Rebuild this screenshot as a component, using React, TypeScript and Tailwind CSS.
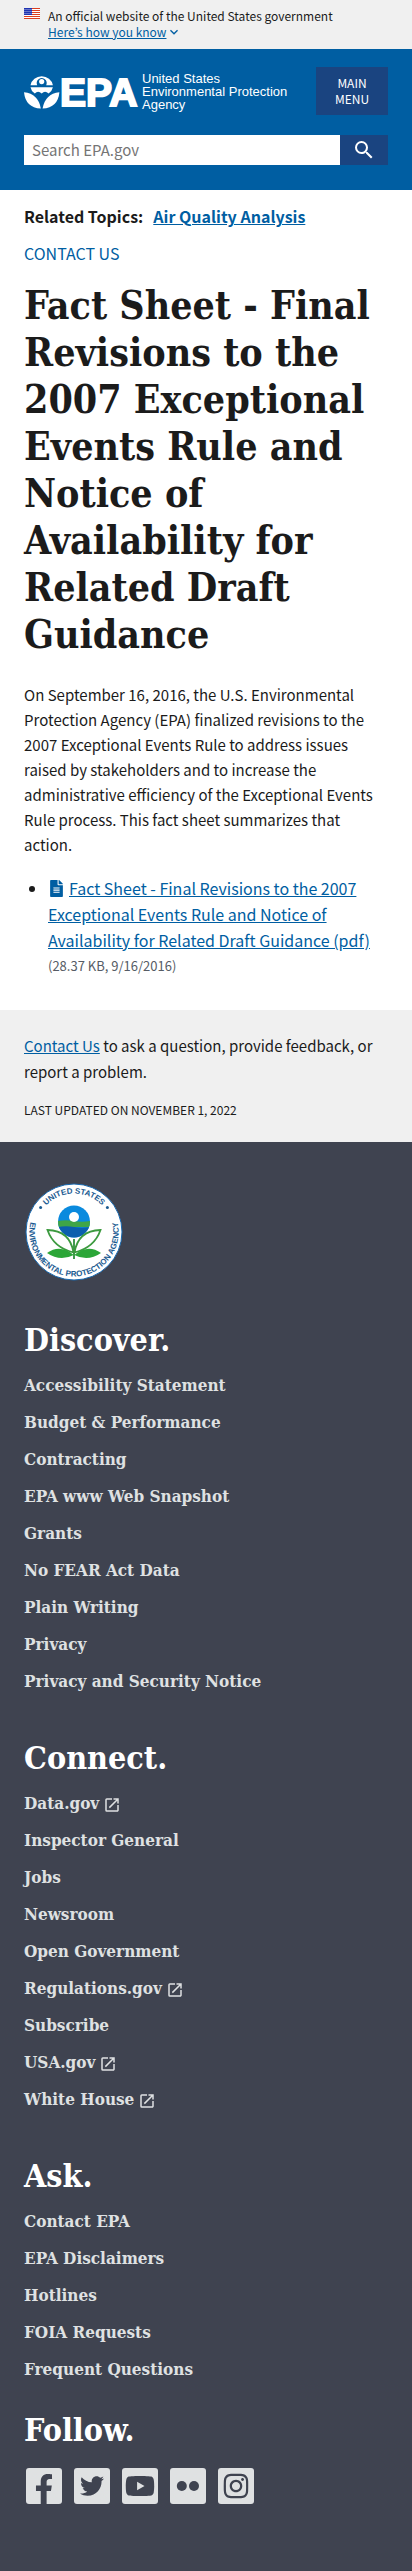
import type { ReactNode } from "react";
import { FaFacebookF, FaFileAlt, FaInstagram, FaTwitter, FaYoutube } from "react-icons/fa";
import { MdExpandMore, MdOpenInNew, MdSearch } from "react-icons/md";

type FooterLink = { label: string; external?: boolean };

const discover: FooterLink[] = [
  { label: "Accessibility Statement" },
  { label: "Budget & Performance" },
  { label: "Contracting" },
  { label: "EPA www Web Snapshot" },
  { label: "Grants" },
  { label: "No FEAR Act Data" },
  { label: "Plain Writing" },
  { label: "Privacy" },
  { label: "Privacy and Security Notice" },
];

const connect: FooterLink[] = [
  { label: "Data.gov", external: true },
  { label: "Inspector General" },
  { label: "Jobs" },
  { label: "Newsroom" },
  { label: "Open Government" },
  { label: "Regulations.gov", external: true },
  { label: "Subscribe" },
  { label: "USA.gov", external: true },
  { label: "White House", external: true },
];

const ask: FooterLink[] = [
  { label: "Contact EPA" },
  { label: "EPA Disclaimers" },
  { label: "Hotlines" },
  { label: "FOIA Requests" },
  { label: "Frequent Questions" },
];

function Flag() {
  return (
    <svg viewBox="0 0 16 11" className="mt-2 h-[11px] w-4 shrink-0" aria-hidden="true">
      <rect width="16" height="11" fill="#fff" />
      {[0, 2, 4, 6, 8, 10].map((y) => (
        <rect key={y} y={y} width="16" height="1" fill="#db3e1f" />
      ))}
      <rect width="8" height="7" fill="#1e33b1" />
      {[1, 3, 5].map((y) =>
        [1, 3, 5, 7].map((x) => (
          <rect key={`${x}-${y}`} x={x - 0.4} y={y} width="0.8" height="0.8" fill="#fff" />
        )),
      )}
    </svg>
  );
}

function Logo() {
  return (
    <a href="#home" className="flex items-center text-white" aria-label="US EPA home">
      <svg viewBox="0 0 116 36" className="h-9 w-[116px] shrink-0 overflow-visible" aria-hidden="true">
        <g fill="#fff">
          <path d="M6.5 12.2A11.4 11 0 0 1 28.9 12.2H22.2A5 5 0 1 0 13.2 12.2Z" />
          <circle cx="17.7" cy="8.6" r="2.6" />
          <path d="M6.5 14.2H28.9Q28 18.2 24.6 20.6Q21 17 17.7 20.6Q14 17 10.8 20.6Q7.2 18.2 6.5 14.2Z" />
          <path d="M0 19.2Q14.5 20.8 16.8 35.6Q1.5 34.5 0 19.2Z" />
          <path d="M35.4 19.2Q21 20.8 18.6 35.6Q34 34.5 35.4 19.2Z" />
        </g>
        <text
          x="36"
          y="33"
          fill="#fff"
          stroke="#fff"
          strokeWidth="2"
          fontSize="39"
          fontWeight="700"
          fontFamily="'Liberation Sans', sans-serif"
        >
          EPA
        </text>
      </svg>
      <span className="ml-0.5 font-['Liberation_Sans',sans-serif] text-[13px] leading-[13px] whitespace-nowrap">
        United States
        <br />
        Environmental Protection
        <br />
        Agency
      </span>
    </a>
  );
}

function Seal() {
  return (
    <svg viewBox="0 0 100 100" className="block size-[100px]" role="img" aria-label="EPA seal">
      <defs>
        <path id="seal-top" d="M11.5 50A38.5 38.5 0 0 1 88.5 50" />
        <path id="seal-bottom" d="M21.3 15.8A44.6 44.6 0 1 0 78.7 15.8" />
      </defs>
      <circle cx="50" cy="50" r="48" fill="#fff" stroke="#1668b0" strokeWidth="1" />
      <g fill="#1b5b91" fontFamily="'Liberation Sans', sans-serif" fontWeight="700" fontSize="8">
        <text textAnchor="middle">
          <textPath href="#seal-top" startOffset="50%">
            UNITED STATES
          </textPath>
        </text>
        <text textAnchor="middle">
          <textPath href="#seal-bottom" startOffset="50%">
            ENVIRONMENTAL PROTECTION AGENCY
          </textPath>
        </text>
        <circle cx="16.6" cy="25.5" r="1.5" />
        <circle cx="83.4" cy="25.5" r="1.5" />
      </g>
      <clipPath id="globe">
        <circle cx="50" cy="39.5" r="16" />
      </clipPath>
      <g clipPath="url(#globe)">
        <rect x="34" y="23" width="32" height="33" fill="#0a8ade" />
        <path d="M34 39Q42 37.5 50 39T66 39V45H34Z" fill="#3fa548" />
        <path d="M34 45Q42 43.5 50 45T66 45V56H34Z" fill="#0b5fae" />
        <circle cx="50" cy="35" r="5" fill="#fff" />
      </g>
      <path d="M50 57V77" stroke="#2d8f3c" strokeWidth="1.8" />
      <g fill="#fff" stroke="#3c9a3f" strokeWidth="1.8">
        <path d="M49.5 70.5Q46 48.5 23.5 48Q29.5 65.5 49.5 70.5Z" />
        <path d="M50.5 70.5Q54 48.5 76.5 48Q70.5 65.5 50.5 70.5Z" />
      </g>
      <g fill="#2ba637">
        <path d="M49.8 73Q36 61.5 23 71Q36 80 49.8 73Z" />
        <path d="M50.2 73Q64 61.5 77 71Q64 80 50.2 73Z" />
      </g>
    </svg>
  );
}

function FooterHeading({ children }: { children: ReactNode }) {
  return (
    <h2 className="font-['DejaVu_Serif_Condensed','DejaVu_Serif',serif] text-[32px] leading-[40px] font-bold text-white">
      {children}
    </h2>
  );
}

function FooterSection({ title, links }: { title: string; links: FooterLink[] }) {
  return (
    <section>
      <FooterHeading>{title}</FooterHeading>
      <ul className="mt-1.5">
        {links.map((link) => (
          <li key={link.label}>
            <a
              href="#footer"
              className="flex h-[37px] items-center gap-1 font-['DejaVu_Serif_Condensed','DejaVu_Serif',serif] text-[17px] font-bold text-[#dfe1e2]"
            >
              {link.label}
              {link.external && <MdOpenInNew className="mt-1 size-[18px]" aria-hidden="true" />}
            </a>
          </li>
        ))}
      </ul>
    </section>
  );
}

function Social({ label, className, children }: { label: string; className?: string; children: ReactNode }) {
  return (
    <a
      href="#social"
      aria-label={label}
      className={`flex size-9 justify-center overflow-hidden rounded-[3px] bg-[#dfe1e2] text-[#3f4350] ${className ?? "items-center"}`}
    >
      {children}
    </a>
  );
}

export default function App() {
  return (
    <div className="min-h-screen bg-white font-['Noto_Sans_CJK_JP',sans-serif] text-base leading-[26px] text-[#1b1b1b]">
      <div className="flex h-[49px] gap-2 bg-[#f0f0f0] px-6 text-xs leading-4">
        <Flag />
        <div className="pt-2">
          <p>An official website of the United States government</p>
          <button className="flex items-center text-[#005ea2]">
            <span className="underline">Here’s how you know</span>
            <MdExpandMore className="size-4" aria-hidden="true" />
          </button>
        </div>
      </div>

      <header className="bg-[#005ea2] px-6 pt-[18px] pb-[25px]">
        <div className="flex items-center justify-between">
          <Logo />
          <button className="h-12 w-[72px] shrink-0 bg-[#1a4480] text-xs leading-4 text-white">
            MAIN
            <br />
            MENU
          </button>
        </div>
        <form className="mt-5 flex h-[30px]" role="search">
          <input
            type="search"
            aria-label="Search EPA.gov"
            placeholder="Search EPA.gov"
            className="min-w-0 flex-1 bg-white px-2 text-[15px] placeholder:text-[#757575]"
          />
          <button type="submit" aria-label="Search" className="flex w-12 items-center justify-center bg-[#1a4480] text-white">
            <MdSearch className="size-6" />
          </button>
        </form>
      </header>

      <main className="px-6 pt-[13px] pb-[31px]">
        <p className="font-bold">
          Related Topics:
          <a href="#topic" className="ml-2.5 text-[#005ea2] underline">
            Air Quality Analysis
          </a>
        </p>
        <a href="#contact" className="mt-[11px] block text-[#005ea2]">
          CONTACT US
        </a>
        <h1 className="mt-4 font-['DejaVu_Serif_Condensed','DejaVu_Serif',serif] text-[39px] leading-[47px] font-bold">
          Fact Sheet - Final Revisions to the 2007 Exceptional Events Rule and Notice of Availability for Related Draft
          Guidance
        </h1>
        <p className="mt-6 text-[15px] leading-[25px]">
          On September 16, 2016, the U.S. Environmental Protection Agency (EPA) finalized revisions to the 2007
          Exceptional Events Rule to address issues raised by stakeholders and to increase the administrative efficiency
          of the Exceptional Events Rule process. This fact sheet summarizes that action.
        </p>
        <ul className="mt-[18px] list-disc pl-6">
          <li>
            <a href="#pdf" className="text-[#005ea2]">
              <FaFileAlt className="mr-1 inline size-[17px] align-[-2px]" aria-hidden="true" />
              <span className="underline">
                Fact Sheet - Final Revisions to the 2007 Exceptional Events Rule and Notice of Availability for Related
                Draft Guidance (pdf)
              </span>
            </a>
            <span className="block text-[13px] text-[#565c65]">(28.37 KB, 9/16/2016)</span>
          </li>
        </ul>
      </main>

      <div className="bg-[#f0f0f0] px-6 pt-[23px] pb-5">
        <p className="text-[15px]">
          <a href="#contact" className="text-[#005ea2] underline">
            Contact Us
          </a>{" "}
          to ask a question, provide feedback, or report a problem.
        </p>
        <p className="mt-3 text-xs leading-[25px]">LAST UPDATED ON NOVEMBER 1, 2022</p>
      </div>

      <footer className="bg-[#3f4350] px-6 pt-10 pb-[67px]">
        <Seal />
        <div className="mt-[38px] flex flex-col gap-[39px]">
          <FooterSection title="Discover." links={discover} />
          <FooterSection title="Connect." links={connect} />
          <FooterSection title="Ask." links={ask} />
        </div>
        <section className="mt-[23px]">
          <FooterHeading>Follow.</FooterHeading>
          <div className="mt-[18px] flex gap-3 px-0.5">
            <Social label="Facebook" className="items-end">
              <FaFacebookF className="size-[30px]" />
            </Social>
            <Social label="Twitter">
              <FaTwitter className="size-6" />
            </Social>
            <Social label="YouTube">
              <FaYoutube className="size-[30px]" />
            </Social>
            <Social label="Flickr">
              <svg viewBox="0 0 36 36" className="size-9" fill="currentColor">
                <circle cx="11.8" cy="18" r="5" />
                <circle cx="24" cy="18" r="5" />
              </svg>
            </Social>
            <Social label="Instagram">
              <FaInstagram className="size-7" />
            </Social>
          </div>
        </section>
      </footer>
    </div>
  );
}
